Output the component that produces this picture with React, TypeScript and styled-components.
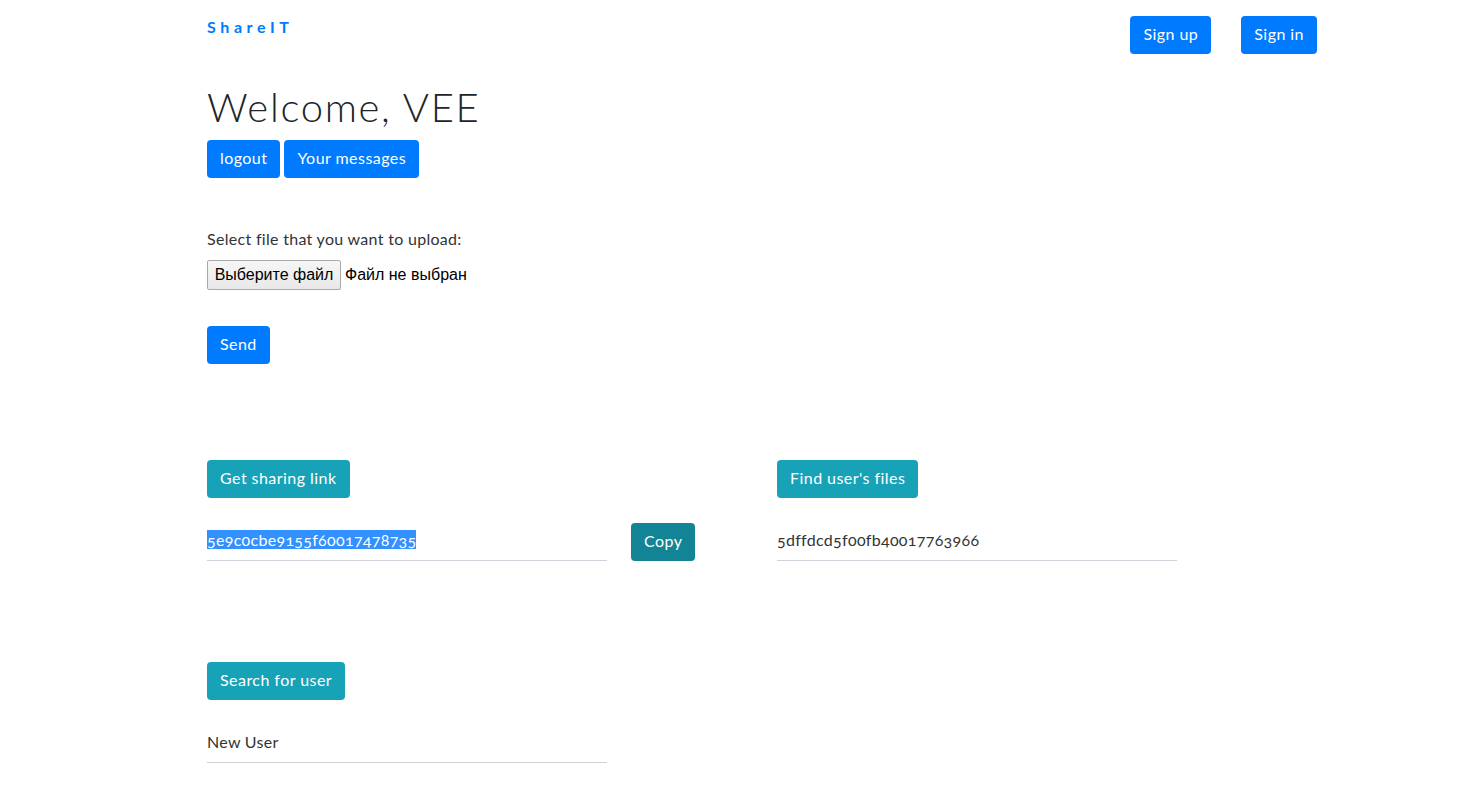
import React from "react";
import styled, { createGlobalStyle } from "styled-components";

const Global = createGlobalStyle`
  html, body { margin: 0; padding: 0; background: #fff; }
  body {
    font-family: Lato, "Open Sans", "Liberation Sans", sans-serif;
    font-size: 16px;
    line-height: 1.5;
    color: #212529;
  }
  * { box-sizing: border-box; }
`;

const Page = styled.div`
  width: 1110px;
  margin-left: 207px;
  display: flex;
  flex-direction: column;
`;

const Header = styled.header`
  display: flex;
  justify-content: space-between;
  align-items: flex-start;
  padding-top: 16px;
`;

const Brand = styled.a`
  font-weight: 700;
  font-size: 16px;
  letter-spacing: 4.6px;
  color: #007bff;
  text-decoration: none;
  line-height: 24px;
  margin-top: -1px;
`;

const NavButtons = styled.div`
  display: flex;
  gap: 30px;
`;

const Button = styled.button<{ $variant?: "primary" | "info" | "infoActive" }>`
  font-family: inherit;
  font-size: 16px;
  line-height: 24px;
  height: 38px;
  padding: 5px 12px 7px;
  border-radius: 4px;
  border: 1px solid transparent;
  color: #fff;
  cursor: pointer;
  letter-spacing: 0.45px;
  background: ${(p) =>
    p.$variant === "info" ? "#17a2b8" : p.$variant === "infoActive" ? "#138496" : "#007bff"};
  flex: none;
`;

const Title = styled.h1`
  font-size: 40px;
  font-weight: 300;
  line-height: 48px;
  margin: 29px 0 9px;
  letter-spacing: 1.7px;
`;

const ButtonRow = styled.div`
  display: flex;
  gap: 4px;
`;

const UploadForm = styled.form`
  display: flex;
  flex-direction: column;
  align-items: flex-start;
  margin-top: 50px;
`;

const Label = styled.label`
  font-weight: 400;
  color: #333;
  line-height: 24px;
  letter-spacing: 0.3px;
  margin-top: -1px;
  margin-bottom: 1px;
`;

const FileRow = styled.div`
  display: flex;
  align-items: center;
  gap: 4px;
  margin: 8px 0 36px;
  font-family: "Liberation Sans", Arial, sans-serif;
  font-size: 16px;
  color: #000;
`;

const FileButton = styled.span`
  display: inline-flex;
  align-items: center;
  height: 30px;
  width: 134px;
  justify-content: center;
  background: linear-gradient(#f6f6f6, #e8e8e8);
  border: 1px solid #a9a9a9;
  border-radius: 2px;
`;

const Grid = styled.div`
  display: grid;
  grid-template-columns: 570px 400px;
  margin-top: 96px;
`;

const Column = styled.div`
  display: flex;
  flex-direction: column;
  align-items: flex-start;
  gap: 25px;
`;

const FieldRow = styled.div`
  display: flex;
  align-items: flex-end;
  gap: 24px;
`;

const Field = styled.div`
  width: 400px;
  height: 38px;
  padding-bottom: 4px;
  border-bottom: 1px solid #ced4da;
  display: flex;
  align-items: center;
  color: #333;
  font-size: 16px;
  letter-spacing: 0.3px;
  font-variant-numeric: oldstyle-nums;
`;

const Selected = styled.span`
  background: #3390ff;
  color: #fff;
  line-height: 19px;
`;

const SearchSection = styled(Column)`
  margin-top: 101px;
`;

export default function App() {
  return (
    <>
      <Global />
      <Page>
        <Header>
          <Brand href="#">ShareIT</Brand>
          <NavButtons>
            <Button>Sign up</Button>
            <Button>Sign in</Button>
          </NavButtons>
        </Header>
        <Title>Welcome, VEE</Title>
        <ButtonRow>
          <Button>logout</Button>
          <Button>Your messages</Button>
        </ButtonRow>
        <UploadForm onSubmit={(e) => e.preventDefault()}>
          <Label>Select file that you want to upload:</Label>
          <FileRow>
            <FileButton>Выберите файл</FileButton>
            <span>Файл не выбран</span>
          </FileRow>
          <Button type="submit">Send</Button>
        </UploadForm>
        <Grid>
          <Column>
            <Button $variant="info">Get sharing link</Button>
            <FieldRow>
              <Field>
                <Selected>5e9c0cbe9155f60017478735</Selected>
              </Field>
              <Button $variant="infoActive">Copy</Button>
            </FieldRow>
          </Column>
          <Column>
            <Button $variant="info">Find user's files</Button>
            <Field>5dffdcd5f00fb40017763966</Field>
          </Column>
        </Grid>
        <SearchSection>
          <Button $variant="info">Search for user</Button>
          <Field>New User</Field>
        </SearchSection>
      </Page>
    </>
  );
}
